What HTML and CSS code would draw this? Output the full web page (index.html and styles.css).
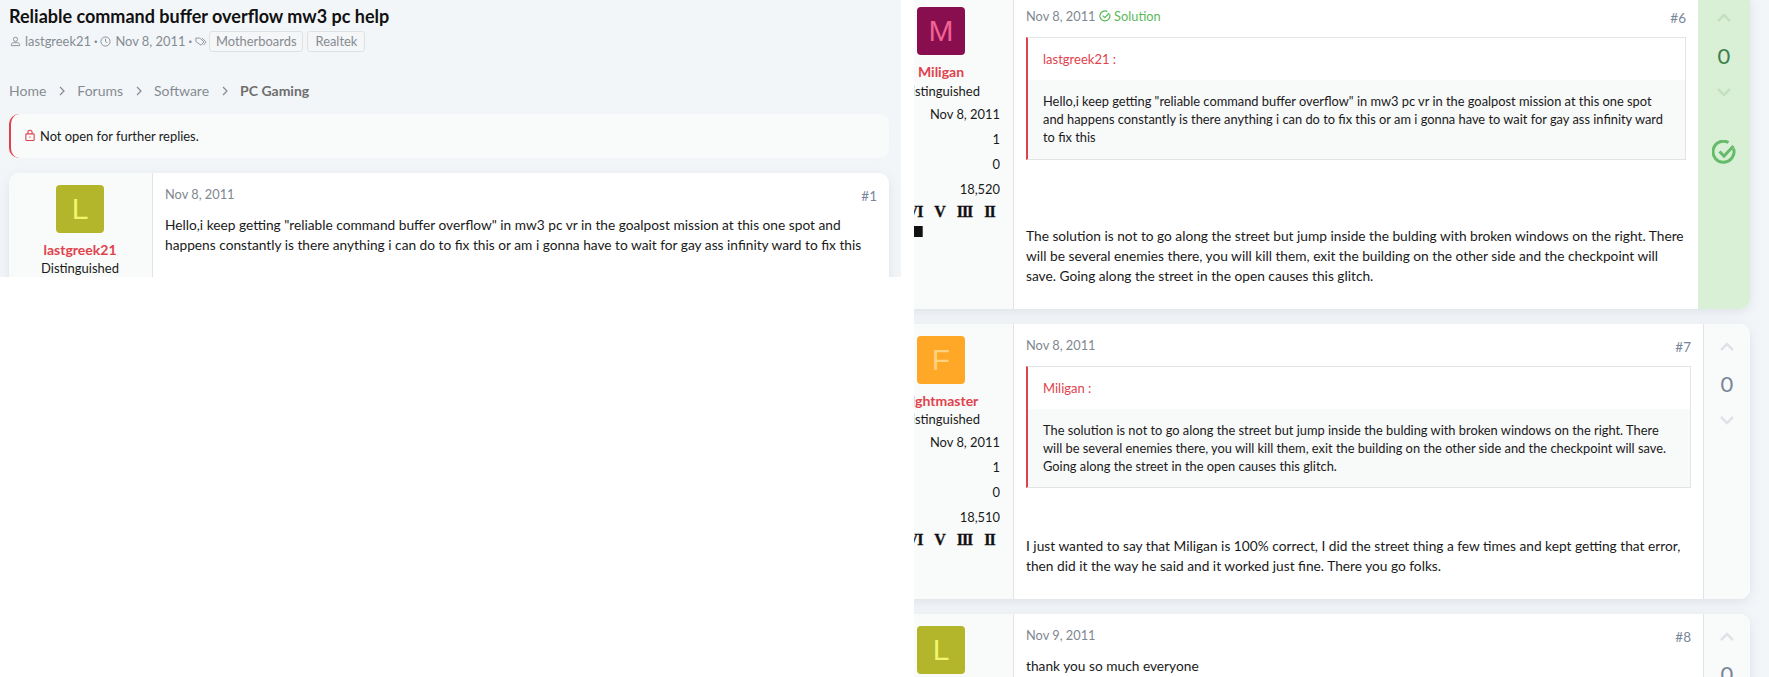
FILE: index.html
```html
<!DOCTYPE html>
<html lang="en">
<head>
    <meta charset="UTF-8">
    <meta name="viewport" content="width=device-width, initial-scale=1.0">
    <title>Reliable command buffer overflow mw3 pc help</title>
    <link rel="stylesheet" href="styles.css">
</head>
<body>
    <div class="page">
        <div class="left-panel">
            <h1 class="thread-title">Reliable command buffer overflow mw3 pc help</h1>
            <div class="thread-meta">
                <svg class="meta-icon" viewBox="0 0 12 12"><circle cx="6" cy="3.6" r="2.3"/><path d="M1.5 10.5v-1c0-1.4 1.2-2.2 2.5-2.2h4c1.3 0 2.5.8 2.5 2.2v1z"/></svg>
                <span>lastgreek21</span><span class="dot">·</span>
                <svg class="meta-icon" viewBox="0 0 12 12"><circle cx="6" cy="6" r="5"/><path d="M6 3v3.2l2 1.2"/></svg>
                <span>Nov 8, 2011</span><span class="dot">·</span>
                <svg class="meta-icon tag-icon" viewBox="0 0 14 12"><path d="M1 2h4.5l5 4.5-3.5 3.8L1 6z"/><path d="M8 2l5 4.5-3 3.6"/></svg>
                <span class="tag">Motherboards</span>
                <span class="tag">Realtek</span>
            </div>
            <nav class="breadcrumb">
                <a>Home</a><span class="crumb-sep"><svg viewBox="0 0 6 10"><path d="M1 1l4 4-4 4"/></svg></span>
                <a>Forums</a><span class="crumb-sep"><svg viewBox="0 0 6 10"><path d="M1 1l4 4-4 4"/></svg></span>
                <a>Software</a><span class="crumb-sep"><svg viewBox="0 0 6 10"><path d="M1 1l4 4-4 4"/></svg></span>
                <a class="crumb-current">PC Gaming</a>
            </nav>
            <div class="notice">
                <svg class="lock-icon" viewBox="0 0 12 14"><rect x="1" y="5" width="10" height="8" rx="1"/><path d="M3.5 5V3.2a2.5 2.5 0 0 1 5 0V5"/><path d="M6 8.2v1.6"/></svg>
                Not open for further replies.
            </div>
            <article class="card">
                <aside class="side">
                    <div class="avatar avatar-olive">L</div>
                    <div class="username">lastgreek21</div>
                    <div class="user-title">Distinguished</div>
                </aside>
                <div class="post">
                    <header class="post-head"><span class="post-date">Nov 8, 2011</span><span class="post-num">#1</span></header>
                    <p class="post-text">Hello,i keep getting "reliable command buffer overflow" in mw3 pc vr in the goalpost mission at this one spot and happens constantly is there anything i can do to fix this or am i gonna have to wait for gay ass infinity ward to fix this</p>
                </div>
            </article>
        </div>

        <div class="right-panel">
            <article class="card card-first">
                <aside class="side">
                    <div class="avatar avatar-plum">M</div>
                    <div class="username">Miligan</div>
                    <div class="user-title">Distinguished</div>
                    <div class="stat">Nov 8, 2011</div>
                    <div class="stat">1</div>
                    <div class="stat">0</div>
                    <div class="stat">18,520</div>
                    <div class="awards">
                        <span class="award">VI</span><span class="award">V</span><span class="award">III</span><span class="award">II</span>
                        <span class="award"><i class="book"></i></span>
                    </div>
                </aside>
                <div class="post">
                    <header class="post-head">
                        <span class="post-date">Nov 8, 2011
                            <span class="solution">
                                <svg class="solution-icon" viewBox="0 0 12 12"><path d="M10.6 4.2A5 5 0 1 1 8.4 1.6"/><path d="M3.8 5.6l2 2 4.4-4.6"/></svg>
                                Solution</span>
                        </span>
                        <span class="post-num">#6</span>
                    </header>
                    <blockquote class="quote">
                        <div class="quote-head">lastgreek21 :</div>
                        <div class="quote-body">Hello,i keep getting "reliable command buffer overflow" in mw3 pc vr in the goalpost mission at this one spot and happens constantly is there anything i can do to fix this or am i gonna have to wait for gay ass infinity ward to fix this</div>
                    </blockquote>
                    <p class="post-text reply-text reply-text-wide">The solution is not to go along the street but jump inside the bulding with broken windows on the right. There will be several enemies there, you will kill them, exit the building on the other side and the checkpoint will save. Going along the street in the open causes this glitch.</p>
                </div>
                <div class="votes votes-solved">
                    <svg class="chevron" viewBox="0 0 14 8"><path d="M1 7l6-6 6 6"/></svg>
                    <div class="vote-count">0</div>
                    <svg class="chevron" viewBox="0 0 14 8"><path d="M1 1l6 6 6-6"/></svg>
                    <svg class="solved-icon" viewBox="0 0 24 24"><path d="M21.5 8.5A10.5 10.5 0 1 1 16.5 2.5"/><path d="M7.5 11.5l4.5 4.5 9.5-10"/></svg>
                </div>
            </article>

            <article class="card">
                <aside class="side">
                    <div class="avatar avatar-orange">F</div>
                    <div class="username">Fightmaster</div>
                    <div class="user-title">Distinguished</div>
                    <div class="stat">Nov 8, 2011</div>
                    <div class="stat">1</div>
                    <div class="stat">0</div>
                    <div class="stat">18,510</div>
                    <div class="awards">
                        <span class="award">VI</span><span class="award">V</span><span class="award">III</span><span class="award">II</span>
                    </div>
                </aside>
                <div class="post">
                    <header class="post-head"><span class="post-date">Nov 8, 2011</span><span class="post-num">#7</span></header>
                    <blockquote class="quote">
                        <div class="quote-head">Miligan :</div>
                        <div class="quote-body">The solution is not to go along the street but jump inside the bulding with broken windows on the right. There will be several enemies there, you will kill them, exit the building on the other side and the checkpoint will save. Going along the street in the open causes this glitch.</div>
                    </blockquote>
                    <p class="post-text reply-text">I just wanted to say that Miligan is 100% correct, I did the street thing a few times and kept getting that error, then did it the way he said and it worked just fine. There you go folks.</p>
                </div>
                <div class="votes">
                    <svg class="chevron" viewBox="0 0 14 8"><path d="M1 7l6-6 6 6"/></svg>
                    <div class="vote-count">0</div>
                    <svg class="chevron" viewBox="0 0 14 8"><path d="M1 1l6 6 6-6"/></svg>
                </div>
            </article>

            <article class="card">
                <aside class="side">
                    <div class="avatar avatar-olive">L</div>
                    <div class="username">lastgreek21</div>
                </aside>
                <div class="post">
                    <header class="post-head"><span class="post-date">Nov 9, 2011</span><span class="post-num">#8</span></header>
                    <p class="post-text">thank you so much everyone</p>
                </div>
                <div class="votes">
                    <svg class="chevron" viewBox="0 0 14 8"><path d="M1 7l6-6 6 6"/></svg>
                    <div class="vote-count">0</div>
                </div>
            </article>
        </div>
    </div>
</body>
</html>
```

FILE: styles.css
```css
* {
    box-sizing: border-box;
}
html, body {
    height: 100%;
}
body {
    margin: 0;
    background: #fff;
    font-family: 'Lato', sans-serif;
    font-size: 14px;
    line-height: 1.4;
    color: #1a1a1a;
    overflow: hidden;
}
.page {
    display: flex;
    height: 677px;
    gap: 13px;
    align-items: flex-start;
}

/* Left column, cut off after the first post */
.left-panel {
    flex: 0 0 901px;
    height: 277px;
    padding: 0 12px 0 9px;
    background: #f3f6f9;
    overflow: hidden;
}
.thread-title {
    margin: 0;
    padding-top: 2px;
    font-size: 18px;
    line-height: 28px;
    font-weight: 700;
    color: #111;
}
.thread-meta {
    display: flex;
    align-items: center;
    gap: 3px;
    margin-top: 1px;
    padding-left: 1px;
    font-size: 12.9px;
    color: #858b92;
}
.meta-icon {
    width: 11px;
    height: 11px;
    margin-right: 1px;
    fill: none;
    stroke: #858b92;
    stroke-width: 1;
}
.tag-icon {
    width: 12px;
    margin-right: -1px;
}
.dot {
    font-weight: 700;
}
.tag {
    padding: 0 6px;
    height: 21px;
    line-height: 19px;
    border: 1px solid #dfe1e3;
    border-radius: 3px;
    background: #f5f6f7;
}
.tag + .tag {
    margin-left: 1px;
    padding: 0 7px;
}
.breadcrumb {
    display: flex;
    align-items: center;
    margin-top: 29px;
    color: #858b92;
}
.crumb-sep {
    display: flex;
    justify-content: center;
    width: 31px;
}
.crumb-sep svg {
    width: 6px;
    height: 10px;
    fill: none;
    stroke: #858b92;
    stroke-width: 1.2;
}
.crumb-current {
    font-weight: 700;
    color: #6e6e6e;
}
.notice {
    display: flex;
    align-items: center;
    gap: 5px;
    height: 44px;
    margin-top: 13px;
    padding-left: 14px;
    background: #f9fafa;
    border-left: 2px solid #e0424c;
    border-radius: 10px;
    font-size: 12.9px;
}
.lock-icon {
    width: 10px;
    height: 13px;
    fill: none;
    stroke: #e0424c;
    stroke-width: 1.3;
}

/* Post cards */
.card {
    display: flex;
    margin-top: 15px;
    background: #fff;
    border-radius: 10px;
    box-shadow: 0 3px 12px rgba(40, 60, 90, 0.1);
    overflow: hidden;
}
.left-panel .card {
    min-height: 200px;
}
.side {
    flex: 0 0 144px;
    padding: 12px 1px 0 0;
    background: #f9fafa;
    border-right: 1px solid #e2e4e6;
    text-align: center;
}
.avatar {
    width: 48px;
    height: 48px;
    margin: 0 auto;
    border-radius: 4px;
    font-family: 'Liberation Sans', sans-serif;
    font-size: 30px;
    line-height: 48px;
    text-align: center;
}
.avatar-olive {
    background: #b3b52a;
    color: #f0f56e;
}
.avatar-plum {
    background: #880e4f;
    color: #f06292;
}
.avatar-orange {
    background: #ffa726;
    color: #ffd27f;
}
.username {
    margin-top: 7px;
    font-weight: 700;
    color: #e0424c;
}
.user-title {
    margin-bottom: -1px;
    font-size: 13px;
    line-height: 18px;
}
.stat {
    margin-top: 5px;
    padding-right: 12px;
    line-height: 20px;
    font-size: 12.9px;
    text-align: right;
}
.awards {
    display: flex;
    flex-wrap: wrap;
    width: 100px;
    margin: 3px 0 0 32px;
}
.award {
    width: 25px;
    height: 20px;
    font-family: 'Liberation Serif', serif;
    font-weight: 700;
    font-size: 16px;
    line-height: 20px;
    letter-spacing: -1px;
    text-align: center;
    color: #111;
    -webkit-text-stroke: 0.3px #111;
}
.book {
    display: block;
    width: 9px;
    height: 11px;
    margin: 4px 0 0 12px;
    background: #111;
    border-right: 1px solid #555;
}
.post {
    flex: 1;
    min-width: 0;
    padding: 12px 12px 23px 12px;
}
.post-head {
    display: flex;
    justify-content: space-between;
    align-items: flex-end;
    height: 20px;
    color: #808890;
}
.post-date {
    font-size: 12.8px;
    position: relative;
    top: -1px;
}
.post-num {
    position: relative;
    top: 1px;
    font-size: 13.5px;
    color: #7a869a;
}
.solution {
    color: #5cb85c;
}
.solution-icon {
    width: 12px;
    height: 12px;
    vertical-align: -1px;
    fill: none;
    stroke: #5cb85c;
    stroke-width: 1.2;
}
.post-text {
    margin: 10px 0 0;
    font-size: 13.72px;
    line-height: 20px;
}
.quote {
    margin: 10px 0 0;
    border: 1px solid #e2e4e6;
    border-left: 2px solid #e0424c;
}
.quote-head {
    height: 42px;
    padding-left: 15px;
    line-height: 42px;
    font-size: 13px;
    color: #e0424c;
}
.quote-body {
    padding: 12px 15px 12px;
    background: #f8f9f9;
    font-size: 12.85px;
    line-height: 18.2px;
}
.reply-text {
    margin-top: 48px;
}
.reply-text-wide {
    margin-top: 66px;
}

/* Vote column */
.votes {
    flex: 0 0 47px;
    display: flex;
    flex-direction: column;
    align-items: center;
    padding-top: 19px;
    background: #f9fafa;
    border-left: 1px solid #e2e4e6;
}
.votes-solved {
    flex-basis: 52px;
    background: #d9f0d6;
    border-left: 0;
}
.chevron {
    width: 14px;
    height: 8px;
    overflow: visible;
    fill: none;
    stroke: #dfe3e7;
    stroke-width: 2.5;
}
.votes-solved .chevron {
    stroke: #c3e0c0;
}
.vote-count {
    margin: 18px 0 17px;
    font-size: 22px;
    line-height: 30px;
    color: #7a869a;
}
.votes-solved .vote-count {
    margin-top: 19px;
    color: #3f7f4c;
}
.solved-icon {
    width: 24px;
    height: 24px;
    margin-top: 44px;
    fill: none;
    stroke: #66bb6a;
    stroke-width: 3;
}

/* Right column: the page starts mid scroll, cut on the top and left */
.right-panel {
    flex: 1;
    height: 677px;
    padding-right: 19px;
    background: #f3f6f9;
    overflow: hidden;
}
.right-panel .card {
    margin-left: -44px;
}
.right-panel .card-first {
    margin-top: -5px;
    border-top-left-radius: 0;
    border-top-right-radius: 0;
}
```
